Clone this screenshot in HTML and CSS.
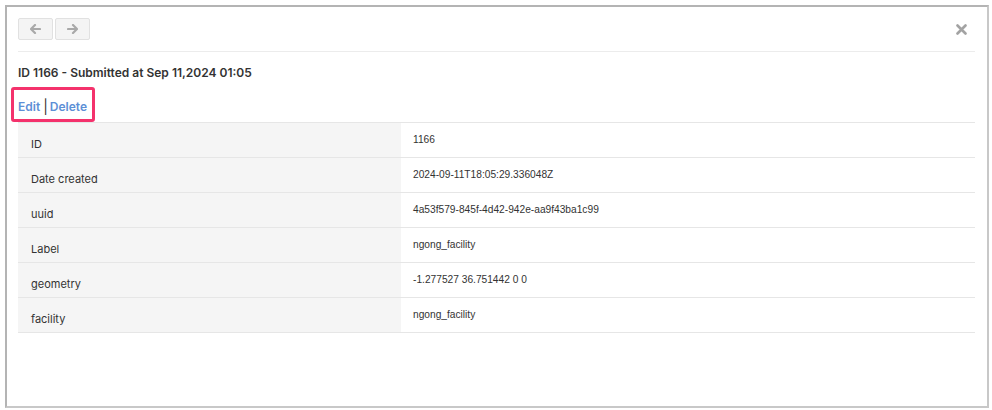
FILE: index.html
```html
<!DOCTYPE html>
<html>
<head>
<meta charset="utf-8">
<link rel="stylesheet" href="styles.css">
</head>
<body>
<div class="frame">
  <div class="toolbar">
    <div class="nav">
      <button class="navbtn" aria-label="Previous">
        <svg width="11" height="10" viewBox="0 0 11 10"><path d="M5 1 L1 5 L5 9 M1.5 5 H10" fill="none" stroke="#a9a9a9" stroke-width="2.2" stroke-linecap="round" stroke-linejoin="round"/></svg>
      </button>
      <button class="navbtn" aria-label="Next">
        <svg width="11" height="10" viewBox="0 0 11 10"><path d="M6 1 L10 5 L6 9 M9.5 5 H1" fill="none" stroke="#a9a9a9" stroke-width="2.2" stroke-linecap="round" stroke-linejoin="round"/></svg>
      </button>
    </div>
    <span class="close">
      <svg width="11" height="11" viewBox="0 0 11 11"><path d="M1.5 1.5 L9.5 9.5 M9.5 1.5 L1.5 9.5" stroke="#a3a3a3" stroke-width="2.6" stroke-linecap="round"/></svg>
    </span>
  </div>
  <h3 class="title">ID 1166 - Submitted at Sep 11,2024 01:05</h3>
  <div class="actions">
    <span class="highlight"><a href="#">Edit</a><span class="sep">|</span><a href="#">Delete</a></span>
  </div>
  <table class="details">
    <tr><th>ID</th><td>1166</td></tr>
    <tr><th>Date created</th><td>2024-09-11T18:05:29.336048Z</td></tr>
    <tr><th>uuid</th><td>4a53f579-845f-4d42-942e-aa9f43ba1c99</td></tr>
    <tr><th>Label</th><td>ngong_facility</td></tr>
    <tr><th>geometry</th><td>-1.277527 36.751442 0 0</td></tr>
    <tr><th>facility</th><td>ngong_facility</td></tr>
  </table>
</div>
</body>
</html>
```

FILE: styles.css
```css
html, body {
  margin: 0;
  padding: 0;
  background: #ffffff;
}
body {
  font-family: Inter, "Liberation Sans", sans-serif;
  color: #333333;
}
.frame {
  margin: 5px 3px 0 5px;
  height: 403px;
  box-sizing: border-box;
  border: 2px solid #b4b4b4;
  border-right-color: #c8c8c8;
  border-bottom-color: #c8c8c8;
  padding: 11px 12px 0 11px;
}
.toolbar {
  display: flex;
  justify-content: space-between;
  align-items: flex-start;
  border-bottom: 1px solid #ececec;
  padding-bottom: 11px;
}
.nav {
  display: flex;
  gap: 2px;
}
.navbtn {
  width: 35px;
  height: 22px;
  padding: 0;
  margin: 0;
  border: 1px solid #e1e1e1;
  background: #f4f4f4;
  border-radius: 2px;
  display: flex;
  align-items: center;
  justify-content: center;
}
.close {
  display: flex;
  margin-top: 6px;
  margin-right: 8px;
}
.title {
  margin: 13px 0 0 0;
  font-size: 12px;
  font-weight: 600;
  color: #333333;
  line-height: 15px;
}
.actions {
  margin: 7px 0 0 -7px;
  height: 35px;
}
.highlight {
  display: inline-flex;
  align-items: center;
  box-sizing: border-box;
  height: 35px;
  padding: 3px 5px 0 4px;
  border: 3px solid #f4326c;
  border-radius: 3px;
  font-size: 12px;
  font-weight: 600;
}
.highlight a {
  color: #5d8fd6;
  text-decoration: none;
}
.sep {
  color: #333333;
  font-weight: 400;
  font-size: 14px;
  margin: 0 2px 0 3px;
}
.details {
  width: 100%;
  border-collapse: collapse;
  border-top: 1px solid #e6e6e6;
  font-size: 11px;
}
.details tr {
  border-bottom: 1px solid #e6e6e6;
}
.details th {
  width: 383px;
  background: #f5f5f5;
  text-align: left;
  font-weight: 400;
  color: #333333;
  padding: 14px 13px 0 13px;
  height: 35px;
  box-sizing: border-box;
  vertical-align: top;
}
.details td {
  padding: 11px 12px 0 12px;
  height: 35px;
  box-sizing: border-box;
  vertical-align: top;
  color: #333333;
  font-size: 10.2px;
  font-family: "Liberation Sans", Arial, sans-serif;
}
```
